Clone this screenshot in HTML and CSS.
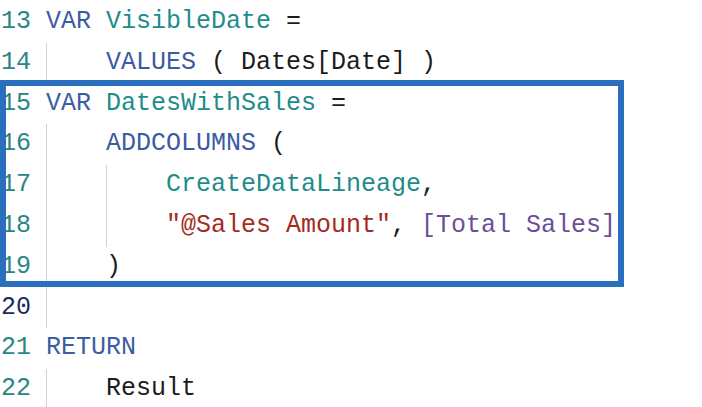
FILE: index.html
```html
<!DOCTYPE html>
<html>
<head>
<meta charset="utf-8">
<link rel="stylesheet" href="styles.css">
</head>
<body>
<div class="editor">
  <div class="line"><span class="ln">13</span><span class="code"><span class="kw">VAR</span> <span class="id">VisibleDate</span> =</span></div>
  <div class="line"><span class="ln">14</span><span class="ind"></span><span class="code"><span class="fn">VALUES</span> ( Dates[Date] )</span></div>
  <div class="line"><span class="ln">15</span><span class="code"><span class="kw">VAR</span> <span class="id">DatesWithSales</span> =</span></div>
  <div class="line"><span class="ln">16</span><span class="ind"></span><span class="code"><span class="fn">ADDCOLUMNS</span> (</span></div>
  <div class="line"><span class="ln">17</span><span class="ind"></span><span class="ind"></span><span class="code"><span class="id">CreateDataLineage</span>,</span></div>
  <div class="line"><span class="ln">18</span><span class="ind"></span><span class="ind"></span><span class="code"><span class="str">"@Sales Amount"</span>, <span class="col">[Total Sales]</span></span></div>
  <div class="line"><span class="ln">19</span><span class="ind"></span><span class="code">)</span></div>
  <div class="line"><span class="ln cur">20</span><span class="ind"></span><span class="code"></span></div>
  <div class="line"><span class="ln">21</span><span class="code"><span class="kw">RETURN</span></span></div>
  <div class="line"><span class="ln">22</span><span class="ind"></span><span class="code">Result</span></div>
  <div class="highlight"></div>
</div>
</body>
</html>
```
FILE: styles.css
```css
html, body {
  margin: 0;
  padding: 0;
  background: #ffffff;
}
.editor {
  position: relative;
  font-family: "Liberation Mono", "DejaVu Sans Mono", monospace;
  font-size: 25px;
  color: #1c1c1c;
  padding-left: 1px;
  padding-top: 2px;
}
.line {
  display: flex;
  height: 40.8px;
  line-height: 40.8px;
  white-space: pre;
}
.ln {
  width: 45px;
  flex: none;
  color: #2a8585;
}
.ln.cur {
  color: #1e2a5e;
}
.ind {
  width: 59px;
  flex: none;
  border-left: 1px solid #d3d3d3;
}
.kw { color: #3d5da3; }
.fn { color: #3a5aa5; }
.id { color: #1d8c8a; }
.str { color: #a52a22; }
.col { color: #6a4f98; }
.highlight {
  position: absolute;
  left: 0;
  top: 80px;
  width: 612px;
  height: 195px;
  border: 6px solid #2a6fbd;
}
```
